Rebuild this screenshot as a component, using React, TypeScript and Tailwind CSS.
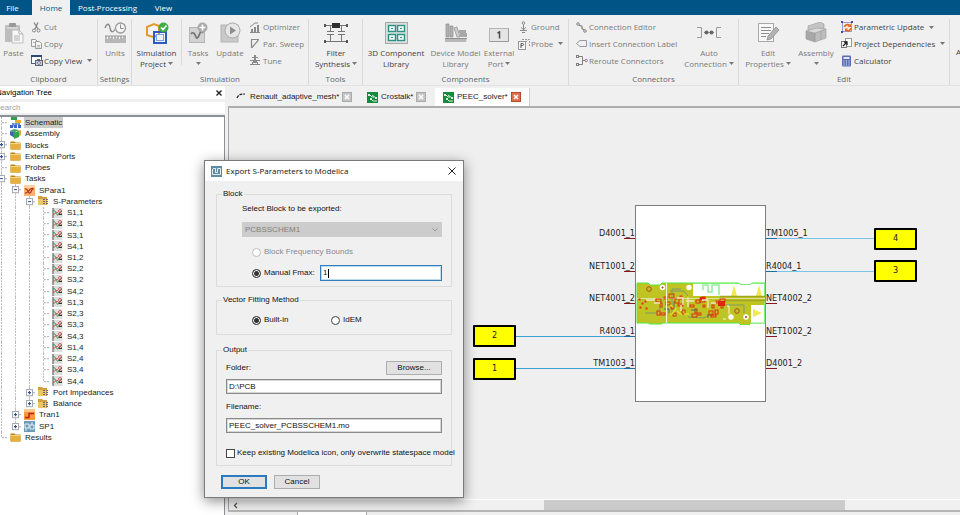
import type { ReactNode } from "react";

const DownArrow = ({ className = "" }: { className?: string }) => (
  <svg className={`inline-block h-[3px] w-[5px] ${className}`} viewBox="0 0 5 3">
    <path d="M0 0h5L2.500 3z" fill="#777" />
  </svg>
);

/* ---------- ribbon icons ---------- */

const PasteIcon = () => (
  <svg width="20" height="22" viewBox="0 0 20 22">
    <rect x="1" y="3" width="15" height="17" rx="1" fill="#bdbdbd" />
    <rect x="5" y="1" width="7" height="4" rx="1" fill="#999" />
    <rect x="3" y="5" width="11" height="2" fill="#d5d5d5" />
    <path d="M8 8h7l4 4v9H8z" fill="#f7f7f7" stroke="#bdbdbd" />
    <path d="M15 8v4h4M10 14h6M10 16h6M10 18h6" fill="none" stroke="#b0b0b0" />
  </svg>
);

const CutIcon = () => (
  <svg width="11" height="11" viewBox="0 0 11 11" fill="none" stroke="#868686">
    <path d="M3 0.500L7 7M7 0.500L4 7" strokeWidth="1.300" />
    <circle cx="3" cy="8.500" r="1.500" />
    <circle cx="7.500" cy="8.500" r="1.500" />
  </svg>
);

const CopyIcon = () => (
  <svg width="11" height="11" viewBox="0 0 11 11" fill="#f3f3f3" stroke="#999">
    <path d="M0.500 1.500h4l2 2v5h-6z" />
    <path d="M4.500 3.500h4l2 2v5h-6z" />
    <path d="M6 7.500h3M6 9h3M2 4.500h2" strokeWidth="0.700" />
  </svg>
);

const CopyViewIcon = () => (
  <svg width="12" height="11" viewBox="0 0 12 11">
    <rect x="0.500" y="0.500" width="10" height="8" fill="#fff" stroke="#4a5f8c" />
    <path d="M0 1h11" stroke="#31487c" strokeWidth="2" />
    <rect x="4.500" y="5.500" width="7" height="5" fill="#c9ced6" stroke="#5b6474" />
    <rect x="6" y="4" width="3" height="2" fill="#5b6474" />
    <circle cx="8" cy="8" r="1.400" fill="#fff" stroke="#4a5366" strokeWidth="0.700" />
  </svg>
);

const UnitsIcon = () => (
  <svg width="23" height="22" viewBox="0 0 23 22">
    <path d="M1 6c2-5 4-5 5 0s3 5 6 0" fill="none" stroke="#8b8b8b" strokeWidth="1.400" />
    <circle cx="16.500" cy="6" r="5" fill="#f5f5f5" stroke="#9b9b9b" strokeWidth="1.300" />
    <path d="M16.500 2.500V6.500h3" fill="none" stroke="#8b8b8b" />
    <rect x="1" y="14" width="21" height="7" fill="#b7b7b7" />
    <path d="M3.500 14v3M6.500 14v2M9.500 14v3M12.500 14v2M15.500 14v3M18.500 14v2" stroke="#f3f3f3" />
    <path d="M1 14h21" stroke="#9a9a9a" />
  </svg>
);

const SimulationIcon = () => (
  <svg width="24" height="23" viewBox="0 0 24 23">
    <path d="M2 5l7-3 5 2v9l-6 2-6-2z" fill="#f5f5f5" stroke="#e39a35" strokeWidth="2" />
    <rect x="9" y="10" width="12" height="11" fill="none" stroke="#2d5bc4" strokeWidth="2" />
    <rect x="11.500" y="12.500" width="7" height="6" fill="#eef2fb" stroke="#7ea0e6" />
    <circle cx="18.500" cy="5.500" r="5" fill="#3fae49" />
    <path d="M16 5.500l2 2 3.500-4" fill="none" stroke="#fff" strokeWidth="1.600" />
  </svg>
);

const TasksIcon = () => (
  <svg width="20" height="22" viewBox="0 0 20 22">
    <rect x="1.500" y="5.500" width="15" height="15" fill="#d2d2d2" stroke="#b5b5b5" />
    <path d="M3 12c2-3 4 0 5 3s3-1 4-4 2-1 3 0" fill="none" stroke="#747474" strokeWidth="1.700" />
    <circle cx="14.500" cy="5.500" r="5" fill="#a9a9a9" />
    <path d="M14.500 2.500v6M11.500 5.500h6" stroke="#fff" strokeWidth="1.700" />
  </svg>
);

const UpdateIcon = () => (
  <svg width="21" height="22" viewBox="0 0 21 22">
    <rect x="1" y="3" width="17" height="17" fill="#c9c9c9" stroke="#b3b3b3" />
    <circle cx="12.500" cy="8.500" r="7.500" fill="#e6e6e6" stroke="#a8a8a8" />
    <path d="M10 4.500v8l6-4z" fill="#8d8d8d" />
  </svg>
);

const OptimizerIcon = () => (
  <svg width="10" height="11" viewBox="0 0 10 11" fill="#8a8a8a">
    <path d="M1 7h2v3H1zM4 5h2v5H4zM7 3h2v7H7zM0 10h10v1H0z" />
    <path d="M0 5l5-4h3" fill="none" stroke="#8a8a8a" />
  </svg>
);

const SweepIcon = () => (
  <svg width="10" height="11" viewBox="0 0 10 11" fill="none" stroke="#8a8a8a">
    <path d="M1.500 10V1.500H9M2 9.500L8.500 2" strokeWidth="1.200" />
  </svg>
);

const TuneIcon = () => (
  <svg width="10" height="11" viewBox="0 0 10 11" fill="#8a8a8a">
    <path d="M4 0h2v5H4zM2 2h6v1H2zM0 5h3v1H0zM7 5h3v1H7zM3 5h4v3H3zM0 9h10v1H0zM2 7h1v3H2zM7 7h1v3H7z" />
  </svg>
);

const FilterIcon = () => (
  <svg width="24" height="22" viewBox="0 0 24 22" fill="none" stroke="#777">
    <path d="M1 3.500h22M1 19.500h22M6.500 4v5M6.500 13v6M17.500 4v5M17.500 13v6" />
    <path d="M3 9.500h7M3 12.500h7M14 9.500h7M14 12.500h7" />
    <rect x="8" y="1" width="8" height="5" fill="#2f2f2f" stroke="none" />
    <path d="M0 2h2v3H0zM22 2h2v3h-2zM0 18h2v3H0zM22 18h2v3h-2z" fill="#555" stroke="none" />
  </svg>
);

const LibraryIcon = () => (
  <svg width="23" height="22" viewBox="0 0 23 22">
    <rect x="0.500" y="0.500" width="22" height="21" fill="#dcdfde" stroke="#a4a8a7" />
    <g fill="#edf7f5" stroke="#2f9185" strokeWidth="1.400">
      <rect x="3.500" y="3.500" width="7" height="6" />
      <rect x="12.500" y="3.500" width="7" height="6" />
      <rect x="3.500" y="12.500" width="7" height="6" />
      <rect x="12.500" y="12.500" width="7" height="6" />
    </g>
    <path d="M6 6h2v1H6zM15 6h2v1h-2zM6 15h2v1H6zM15 15h2v1h-2z" fill="#2f9185" />
  </svg>
);

const DeviceIcon = () => (
  <svg width="24" height="22" viewBox="0 0 24 22">
    <path d="M2 2h3v13H2zM6 4h3v11H6z" fill="#b1b1b1" stroke="#8d8d8d" strokeWidth="0.700" />
    <path d="M10 6l3-1 3 10h-3z" fill="#cdcdcd" stroke="#8d8d8d" strokeWidth="0.700" />
    <path d="M15 8h7v3h-7zM16 11h7v4h-7z" fill="#a8a8a8" />
    <path d="M1 16h22l-1 4H1z" fill="#b8b8b8" />
    <path d="M1 16.500h22" stroke="#8f8f8f" />
  </svg>
);

const ExternalPortIcon = () => (
  <svg width="20" height="22" viewBox="0 0 20 22">
    <rect x="0.500" y="6.500" width="19" height="13" fill="#e4e4e4" stroke="#b5b5b5" />
    <path d="M1 19.500h18.500v-13" fill="none" stroke="#9b9b9b" />
    <path d="M8.500 11l2-1v6.500" fill="none" stroke="#4c4c4c" strokeWidth="1.500" />
  </svg>
);

const GroundIcon = () => (
  <svg width="11" height="12" viewBox="0 0 11 12" fill="none" stroke="#888">
    <circle cx="5.500" cy="2" r="1.300" />
    <path d="M5.500 3.500v6M2 9.500h7M4 11.500h3M3 6.500l2.500 2L8 6.500" />
  </svg>
);

const ProbeIcon = () => (
  <svg width="12" height="12" viewBox="0 0 12 12" fill="none" stroke="#999">
    <rect x="0.500" y="3.500" width="7" height="8" fill="#f5f5f5" />
    <path d="M3 10V5.500h1.500a1 1 0 010 2H3" stroke="#555" />
    <path d="M4 1.500h7.500V8M7.500 4.500l3-3" strokeDasharray="2 1" />
  </svg>
);

const ConnectionIcon = () => (
  <svg width="11" height="11" viewBox="0 0 11 11" fill="none" stroke="#858585">
    <circle cx="2" cy="2" r="1.300" />
    <circle cx="9" cy="9" r="1.300" />
    <path d="M3 3l3 1.500v2L8 8" strokeWidth="1.300" />
  </svg>
);

const LabelIcon = () => (
  <svg width="11" height="11" viewBox="0 0 11 11" fill="none" stroke="#999">
    <path d="M0.500 5.500L4 2.500h6.500v6H4z" />
  </svg>
);

const RerouteIcon = () => (
  <svg width="12" height="11" viewBox="0 0 12 11" fill="none" stroke="#808080">
    <rect x="0.500" y="0.500" width="2" height="2" />
    <rect x="0.500" y="8.500" width="2" height="2" />
    <path d="M3 1.500h3.500v8H3M6.500 5.500H9" />
    <circle cx="10.200" cy="5.500" r="1.200" />
  </svg>
);

const AutoIcon = () => (
  <svg width="24" height="22" viewBox="0 0 24 22" fill="none" stroke="#9a9a9a">
    <path d="M0 5.500h4.500v10H0M24 5.500h-4.500v10H24" />
    <path d="M7 10.500h10" stroke="#999" />
    <circle cx="9.500" cy="10.500" r="2" fill="#666" stroke="none" />
    <circle cx="14.500" cy="10.500" r="2" fill="#666" stroke="none" />
  </svg>
);

const EditIcon = () => (
  <svg width="23" height="22" viewBox="0 0 23 22">
    <rect x="1.500" y="1.500" width="15" height="18" fill="#f8f8f8" stroke="#a9a9a9" />
    <path d="M4 5.500h10M4 8.500h10M4 11.500h8M4 14.500h5" stroke="#8c8c8c" />
    <path d="M10 18l1-4 8-9 3 3-8 9z" fill="#b3b3b3" stroke="#8e8e8e" strokeWidth="0.800" />
  </svg>
);

const AssemblyIcon = () => (
  <svg width="22" height="22" viewBox="0 0 22 22" stroke="#999" strokeWidth="0.600">
    <path d="M3 4l12-4 4 2v4L6 9 3 8z" fill="#c4c4c4" />
    <path d="M1 9l9 2v9l-9-3z" fill="#a8a8a8" />
    <path d="M10 11l11-4v9l-11 4z" fill="#bdbdbd" />
    <path d="M1 9l11-3 9 1-11 4z" fill="#dadada" />
    <path d="M16 9v9" />
  </svg>
);

const ParametricIcon = () => (
  <svg width="12" height="12" viewBox="0 0 12 12">
    <rect x="1.500" y="1.500" width="9" height="9" fill="#fbe9dc" stroke="#9a9cd4" />
    <path d="M0 0h2v2H0zM10 0h2v2h-2zM0 10h2v2H0z" fill="#4349b3" />
    <path d="M3.500 6a3 3 0 015-1.500M10 7a3 3 0 01-5 2" fill="none" stroke="#e0692a" strokeWidth="1.800" />
    <path d="M10 2.500v3.500H6.500zM4 11V7.500h3z" fill="#e0692a" />
  </svg>
);

const DependenciesIcon = () => (
  <svg width="11" height="11" viewBox="0 0 11 11" fill="none">
    <rect x="4.500" y="0.500" width="6" height="8" fill="#fff" stroke="#999" />
    <rect x="0.500" y="3.500" width="5" height="6" fill="#f5f5f5" stroke="#777" />
    <path d="M2 8l4-4M3 4h3v3" stroke="#222" strokeWidth="1.300" />
  </svg>
);

const CalculatorIcon = () => (
  <svg width="11" height="12" viewBox="0 0 11 12">
    <rect x="1" y="0.500" width="9" height="11" rx="1" fill="#5c6db5" />
    <rect x="2.500" y="2" width="6" height="2" fill="#dfe4f7" />
    <path d="M3 5.500v5M5.500 5.500v5M8 5.500v5" stroke="#dfe4f7" strokeWidth="1.200" strokeDasharray="1 1" />
  </svg>
);

/* ---------- ribbon building blocks ---------- */

type GroupProps = { label: string; width: string; children?: ReactNode };

const Group = ({ label, width, children }: GroupProps) => (
  <section className={`flex shrink-0 flex-col border-r border-[#d9d9d9] ${width}`}>
    <div className="flex h-[54px]">{children}</div>
    <h2 className="pt-1 text-center leading-[12px] text-[#666]">{label}</h2>
  </section>
);

type BigProps = { icon: ReactNode; lines: string[]; width: string; arrow?: boolean; dark?: boolean };

const BigButton = ({ icon, lines, width, arrow, dark }: BigProps) => (
  <button
    className={`flex shrink-0 flex-col items-center whitespace-nowrap pt-[3px] leading-[11px] ${width} ${
      dark ? "text-[#444]" : "text-[#7a7a7a]"
    }`}
  >
    <span className="mb-[3px] flex h-[22px] items-center">{icon}</span>
    <span>{lines[0]}</span>
    <span className="flex h-[11px] items-center gap-[2px]">
      {lines[1]}
      {arrow && <DownArrow />}
    </span>
  </button>
);

const SmallColumn = ({ children, className = "" }: { children: ReactNode; className?: string }) => (
  <div className={`grid shrink-0 grid-rows-3 ${className}`}>{children}</div>
);

type SmallProps = { icon: ReactNode; label: string; arrow?: boolean; dark?: boolean };

const SmallButton = ({ icon, label, arrow, dark }: SmallProps) => (
  <button className={`flex items-center whitespace-nowrap ${dark ? "text-[#444]" : "text-[#7a7a7a]"}`}>
    <span className="w-[13px]">{icon}</span>
    {label}
    {arrow && <DownArrow className="ml-[5px]" />}
  </button>
);

const Ribbon = () => (
  <div className="flex h-[71px] shrink-0 overflow-hidden border-b border-[#e2e2e2] bg-[#f0f0f0] font-['Open_Sans',sans-serif] pt-1 text-[8px]">
    <Group label="Clipboard" width="w-[98px]">
      <BigButton icon={<PasteIcon />} lines={["Paste"]} width="w-[27px]" />
      <SmallColumn className="pl-1">
        <SmallButton icon={<CutIcon />} label="Cut" />
        <SmallButton icon={<CopyIcon />} label="Copy" />
        <SmallButton icon={<CopyViewIcon />} label="Copy View" arrow dark />
      </SmallColumn>
    </Group>
    <Group label="Settings" width="w-[34px]">
      <BigButton icon={<UnitsIcon />} lines={["Units"]} width="w-[34px]" />
    </Group>
    <Group label="Simulation" width="w-[177px]">
      <BigButton icon={<SimulationIcon />} lines={["Simulation", "Project"]} width="w-[49px]" arrow dark />
      <div className="mb-1 w-px bg-[#d9d9d9]" />
      <BigButton icon={<TasksIcon />} lines={["Tasks", ""]} width="w-8" arrow />
      <BigButton icon={<UpdateIcon />} lines={["Update"]} width="w-8" />
      <SmallColumn className="pl-1">
        <SmallButton icon={<OptimizerIcon />} label="Optimizer" />
        <SmallButton icon={<SweepIcon />} label="Par. Sweep" />
        <SmallButton icon={<TuneIcon />} label="Tune" />
      </SmallColumn>
    </Group>
    <Group label="Tools" width="w-[54px]">
      <BigButton icon={<FilterIcon />} lines={["Filter", "Synthesis"]} width="w-[54px]" arrow dark />
    </Group>
    <Group label="Components" width="w-[206px]">
      <BigButton icon={<LibraryIcon />} lines={["3D Component", "Library"]} width="w-[66px]" dark />
      <BigButton icon={<DeviceIcon />} lines={["Device Model", "Library"]} width="w-[53px]" />
      <BigButton icon={<ExternalPortIcon />} lines={["External", "Port"]} width="w-[34px]" arrow />
      <SmallColumn className="pl-[2px]">
        <SmallButton icon={<GroundIcon />} label="Ground" />
        <SmallButton icon={<ProbeIcon />} label="Probe" arrow />
      </SmallColumn>
    </Group>
    <Group label="Connectors" width="w-[170px]">
      <SmallColumn className="w-[114px] pl-[7px]">
        <SmallButton icon={<ConnectionIcon />} label="Connection Editor" />
        <SmallButton icon={<LabelIcon />} label="Insert Connection Label" />
        <SmallButton icon={<RerouteIcon />} label="Reroute Connectors" />
      </SmallColumn>
      <BigButton icon={<AutoIcon />} lines={["Auto", "Connection"]} width="w-[52px]" arrow />
    </Group>
    <Group label="Edit" width="w-[211px]">
      <BigButton icon={<EditIcon />} lines={["Edit", "Properties"]} width="w-[58px]" arrow />
      <BigButton icon={<AssemblyIcon />} lines={["Assembly", ""]} width="w-[38px]" arrow />
      <SmallColumn className="pl-[6px]">
        <SmallButton icon={<ParametricIcon />} label="Parametric Update" arrow dark />
        <SmallButton icon={<DependenciesIcon />} label="Project Dependencies" arrow dark />
        <SmallButton icon={<CalculatorIcon />} label="Calculator" dark />
      </SmallColumn>
    </Group>
    <button className="pl-[6px] text-[#444]">A</button>
  </div>
);

/* ---------- navigation tree ---------- */

const FolderIcon = () => (
  <svg width="11" height="10" viewBox="0 0 11 10">
    <path d="M0.500 1.500h4l1 1h5v7h-10z" fill="#b98318" />
    <path d="M0.500 3.500h10v6h-10z" fill="#e6b03c" />
    <path d="M0.500 3.500h10" stroke="#f7d888" />
  </svg>
);

const StackFolderIcon = () => (
  <svg width="11" height="10" viewBox="0 0 11 10">
    <path d="M0 0h4l1 1h4v8H0z" fill="#cfa03e" />
    <path d="M0 3h8v6H0z" fill="#ecc565" />
    <path d="M5 3.500h5M5 5.500h6M5 7.500h6" stroke="#6d6478" strokeDasharray="2 1" />
  </svg>
);

const SchematicIcon = () => (
  <svg width="12" height="11" viewBox="0 0 12 11">
    <rect x="1" y="0" width="6" height="3" fill="#2f9e48" />
    <rect x="5" y="3" width="6" height="3" fill="#e8b132" />
    <path d="M2 7h8M3 6v4M6 6v4M9 6v4" stroke="#3c62c4" />
    <path d="M0 8h3v3H0zM4 8h3v3H4zM8 8h3v3H8z" fill="#3c62c4" />
  </svg>
);

const CubeIcon = () => (
  <svg width="12" height="11" viewBox="0 0 12 11">
    <path d="M7 3l4-1v5L8 9z" fill="#e0a93a" />
    <path d="M0 3l4-2 5 1-4 2z" fill="#3fa85a" />
    <path d="M0 3l5 1v6L0 7z" fill="#3f62b4" />
    <path d="M3 5l6-2v6l-5 2z" fill="#37a34a" />
  </svg>
);

const SParaIcon = () => (
  <svg width="11" height="11" viewBox="0 0 11 11">
    <rect width="11" height="11" fill="#f9b473" />
    <path d="M0 0h11v3H0z" fill="#fbd0a2" />
    <path d="M1 4c3-1 3 5 5 4s1-5 4-4M1 8c3 1 4-5 8-5" fill="none" stroke="#b8341c" strokeWidth="1.200" />
  </svg>
);

const CurveIcon = () => (
  <svg width="11" height="10" viewBox="0 0 11 10">
    <rect x="0.500" width="10" height="10" fill="#dedede" />
    <path d="M1 0v10" stroke="#555" />
    <path d="M1 3c3-2 3 5 5 4s2-4 4-4" fill="none" stroke="#279a3c" />
    <path d="M1 6c2 1 3-3 5-1s3 1 4 0" fill="none" stroke="#c8283a" strokeWidth="0.800" />
    <circle cx="8" cy="3" r="1.500" fill="none" stroke="#c8283a" strokeWidth="0.700" />
    <path d="M7 6.500h3" stroke="#333" />
  </svg>
);

const TranIcon = () => (
  <svg width="11" height="11" viewBox="0 0 11 11">
    <rect width="11" height="11" fill="#f59a3c" />
    <path d="M0 0h11v3H0z" fill="#fac68b" />
    <path d="M1 8.500h4v-4h5" fill="none" stroke="#c01f14" strokeWidth="1.500" />
  </svg>
);

const SpIcon = () => (
  <svg width="11" height="11" viewBox="0 0 11 11">
    <rect width="11" height="11" fill="#6d9ab8" />
    <path d="M1 3h4v4H1zM6 4h4v4H6zM2 7v3M8 1v3" fill="none" stroke="#e6f1f8" />
  </svg>
);

type Guide = "line" | "tee" | "end";
type TreeRow = {
  label: string;
  icon: ReactNode;
  guides: Guide[];
  toggle?: "plus" | "minus";
  selected?: boolean;
};

const traces = [1, 2, 3, 4].flatMap((to) => [1, 2, 3, 4].map((from) => `S${from},${to}`));

const treeRows: TreeRow[] = [
  { label: "Schematic", icon: <SchematicIcon />, guides: ["tee"], selected: true },
  { label: "Assembly", icon: <CubeIcon />, guides: ["tee"] },
  { label: "Blocks", icon: <FolderIcon />, guides: ["tee"], toggle: "plus" },
  { label: "External Ports", icon: <FolderIcon />, guides: ["tee"], toggle: "plus" },
  { label: "Probes", icon: <FolderIcon />, guides: ["tee"] },
  { label: "Tasks", icon: <FolderIcon />, guides: ["tee"], toggle: "minus" },
  { label: "SPara1", icon: <SParaIcon />, guides: ["line", "tee"], toggle: "minus" },
  { label: "S-Parameters", icon: <StackFolderIcon />, guides: ["line", "line", "tee"], toggle: "minus" },
  ...traces.map((label, i): TreeRow => ({
    label,
    icon: <CurveIcon />,
    guides: ["line", "line", "line", i === traces.length - 1 ? "end" : "tee"],
  })),
  { label: "Port Impedances", icon: <StackFolderIcon />, guides: ["line", "line", "tee"], toggle: "plus" },
  { label: "Balance", icon: <StackFolderIcon />, guides: ["line", "line", "end"], toggle: "plus" },
  { label: "Tran1", icon: <TranIcon />, guides: ["line", "tee"], toggle: "plus" },
  { label: "SP1", icon: <SpIcon />, guides: ["line", "end"], toggle: "plus" },
  { label: "Results", icon: <FolderIcon />, guides: ["end"] },
];

const GuideCell = ({ kind, toggle }: { kind: Guide; toggle?: "plus" | "minus" }) => (
  <svg className="h-full w-[14px] shrink-0" viewBox="0 0 14 11" preserveAspectRatio="none">
    <path d={kind === "end" ? "M6.500 0v5.500" : "M6.500 0v11"} stroke="#bdbdbd" strokeDasharray="2 1" />
    {kind !== "line" && <path d="M7 5.500h6" stroke="#bdbdbd" strokeDasharray="2 1" />}
    {toggle && (
      <>
        <rect x="3.500" y="2.500" width="6" height="6" fill="#fff" stroke="#a3a9b5" />
        <path d={toggle === "plus" ? "M5 5.500h3M6.500 4v3" : "M5 5.500h3"} stroke="#35518c" />
      </>
    )}
  </svg>
);

const NavigationTree = () => (
  <aside className="flex w-[225px] shrink-0 flex-col">
    <div className="flex h-[13px] items-center justify-between overflow-hidden bg-white pr-[2px]">
      <h2 className="-ml-1 text-black">Navigation Tree</h2>
      <button aria-label="Close" className="p-px">
        <svg width="6" height="6" viewBox="0 0 6 6" stroke="#222" strokeWidth="1.400">
          <path d="M0.500 0.500l5 5M5.500 0.500l-5 5" />
        </svg>
      </button>
    </div>
    <div className="mt-[3px] overflow-hidden bg-white">
      <input
        type="search"
        aria-label="Search"
        placeholder="Search"
        className="-ml-[5px] block h-[11px] w-full leading-[11px] outline-none placeholder:text-[#a0a0a0]"
      />
    </div>
    <div className="mt-[2px] flex-1 overflow-hidden border-r border-t-2 border-[#8c9096] bg-white">
      <ul className="-ml-[5px] grid h-[326px] auto-rows-fr text-[#222]">
        {treeRows.map((row) => (
          <li key={row.label} className="flex min-h-0 items-center">
            {row.guides.map((kind, i) => (
              <GuideCell key={i} kind={kind} toggle={i === row.guides.length - 1 ? row.toggle : undefined} />
            ))}
            <span className="mr-[2px] flex w-[13px] shrink-0 justify-center">{row.icon}</span>
            <span className={`whitespace-nowrap px-px leading-[11px] ${row.selected ? "bg-[#cbcbcb]" : ""}`}>
              {row.label}
            </span>
          </li>
        ))}
      </ul>
    </div>
  </aside>
);

/* ---------- document tabs ---------- */

const DesignIcon = () => (
  <svg width="11" height="11" viewBox="0 0 11 11">
    <rect width="11" height="11" fill="#148a3c" />
    <path d="M1 3h2l2 2h2M4 7l2 2h4M5 3l4 3" fill="none" stroke="#d8f2df" />
    <path d="M1 2h2v2H1zM8 5h2v2H8zM3 6h2v2H3z" fill="#d8f2df" />
  </svg>
);

const ArcIcon = () => (
  <svg width="11" height="11" viewBox="0 0 11 11" fill="none" stroke="#222" strokeWidth="1.200">
    <path d="M1 6C2 3 4 2 9 2" strokeDasharray="3 1" />
  </svg>
);

const TabClose = ({ active }: { active?: boolean }) => (
  <button aria-label="Close tab">
    <svg width="10" height="10" viewBox="0 0 10 10">
      <rect
        x="0.500"
        y="0.500"
        width="9"
        height="9"
        fill={active ? "#dd6f4d" : "#c6c6c6"}
        stroke={active ? "#b9492a" : "#a9a9a9"}
      />
      <path d="M3 3l4 4M7 3l-4 4" stroke="#fff" strokeWidth="1.500" />
    </svg>
  </button>
);

const DocumentTabs = () => (
  <div className="flex h-[22px] shrink-0 items-stretch border-b-2 border-[#adadad] bg-[#f0f0f0] pl-2 pt-[2px] text-[#222]">
    <div className="flex w-[131px] items-center gap-[3px]">
      <ArcIcon />
      <span>Renault_adaptive_mesh*</span>
      <TabClose />
    </div>
    <div className="flex w-[68px] items-center gap-[3px]">
      <DesignIcon />
      <span>Crostalk*</span>
      <TabClose />
    </div>
    <div className="flex items-center gap-[3px] border-r border-[#ccc] bg-white px-2">
      <DesignIcon />
      <span>PEEC_solver*</span>
      <TabClose active />
    </div>
  </div>
);

/* ---------- schematic ---------- */

const specks = [
  [3, 18], [6, 22], [4, 26], [9, 20], [10, 27], [21, 30], [25, 32], [20, 18], [24, 22], [28, 16], [30, 21],
  [33, 13], [35, 26], [37, 32], [39, 18], [42, 23], [44, 15], [46, 29], [54, 24], [56, 33], [59, 28], [62, 32],
  [60, 19], [64, 17], [67, 24], [66, 16], [73, 30], [75, 34], [76, 24], [79, 29], [80, 20], [84, 18], [85, 23],
];

const PcbLayout = () => (
  <svg width="130" height="44" viewBox="0 0 130 44" className="absolute left-0 top-[75px]" fill="none">
    <path
      d="M1 2h11l2 2h10l2-2h77l2 2h9l2-2h13v40h-14l-2 2h-8l-2-2H27l-2 1H14l-2-1H1z"
      fill="#bfc423"
      stroke="#4dea3c"
    />
    <rect x="57" y="3" width="71" height="12" fill="#fff" />
    <rect x="115" y="24" width="13" height="18" fill="#fff" />
    <path d="M57 2.500h46l2 1h9l2-1h12.500v39.500h-14" stroke="#7ef07a" />
    <path d="M67 9V4h5v7h4V4h7v10" stroke="#8df09c" strokeWidth="1.500" />
    <path d="M98 4l-3 11h6zM123 4l-3 11h6zM117 28v8l9-4z" fill="#f0ea52" />
    <path d="M1 17.500h128" stroke="#dfe29a" />
    <path d="M84 15.500h45M86 19.500h43" stroke="#a3a51c" strokeWidth="1.500" />
    <path d="M9 32h12l4-6M34 10h14l4 5M52 36l16 1 8-5M88 24h20v8M45 8h-9v26" stroke="#7f9a6c" />
    <path d="M30 8h-4v28M40 34h20M62 20v17M87 17v22" stroke="#a0ce38" />
    <g stroke="#dd3010">
      {specks.map(([x, y], i) => (
        <rect key={i} x={x} y={y} width={x < 12 ? 1 : 2 + (i % 4)} height={x < 12 ? 1 : 2 + (i % 3)} />
      ))}
      <circle cx="13" cy="8" r="2.300" stroke="#b5451c" />
      <circle cx="101" cy="30" r="2.300" stroke="#b5451c" />
    </g>
    <path d="M82 20h7v5h-7zM64 16h5v3h-5z" fill="#e02414" />
    <path
      d="M10 19h8v-2M18 22h6M41 17h6v7M50 20h8M66 19h6v8M75 22h5M45 24v6M52 16v10"
      stroke="#efe8c4"
      strokeWidth="1.300"
    />
    <path d="M34 24l6 4-5 6M41 30l5 4M48 33h5" stroke="#eadc2b" strokeWidth="1.500" />
    <path d="M28 28h5v4M38 20v8M55 29h6M72 33v4" stroke="#536a60" />
    <path d="M30.500 2v40M91 25h2v8M87 38h3" stroke="#f6f6d8" />
    <g fill="#fff">
      <circle cx="26.500" cy="6.500" r="2.700" />
      <circle cx="53" cy="6.500" r="2.700" />
      <circle cx="95" cy="36" r="2.700" />
      <circle cx="110" cy="36" r="2.700" />
    </g>
    <path d="M26 6h1v1h-1zM109.500 35.500h1v1h-1z" stroke="#c03020" />
  </svg>
);

const leftPins = [
  { name: "D4001_1", wired: false },
  { name: "NET1001_2", wired: false },
  { name: "NET4001_2", wired: false },
  { name: "R4003_1", wired: true },
  { name: "TM1003_1", wired: true },
];

const rightPins = [
  { name: "TM1005_1", wired: true },
  { name: "R4004_1", wired: true },
  { name: "NET4002_2", wired: false },
  { name: "NET1002_2", wired: false },
  { name: "D4001_2", wired: false },
];

const pinTops = ["top-[121px]", "top-[154px]", "top-[186px]", "top-[219px]", "top-[251px]"];

const ports = [
  { id: 4, place: "left-[645px] top-[120px]" },
  { id: 3, place: "left-[645px] top-[152px]" },
  { id: 2, place: "left-[244px] top-[217px]" },
  { id: 1, place: "left-[244px] top-[250px]" },
];

const SchematicCanvas = () => (
  <div className="relative flex-1 overflow-hidden bg-[#efefef] font-['DejaVu_Sans_Condensed','Noto_Sans',sans-serif] text-[9px] text-[#222]">
    {/* wires */}
    <div className="absolute left-[287px] top-[228px] h-px w-[120px] bg-[#3c9ed6]" />
    <div className="absolute left-[287px] top-[260px] h-px w-[120px] bg-[#3c9ed6]" />
    <div className="absolute left-[537px] top-[130px] h-px w-[108px] bg-[#7cc3ea]" />
    <div className="absolute left-[537px] top-[163px] h-px w-[108px] bg-[#7cc3ea]" />

    {leftPins.map((pin, i) => (
      <div key={pin.name} className={`absolute left-[340px] flex w-[66px] flex-col items-end leading-[9px] ${pinTops[i]}`}>
        {pin.name}
        <span className={`h-px w-[11px] ${pin.wired ? "bg-[#1c6ea4]" : "bg-[#8e1616]"}`} />
      </div>
    ))}
    {rightPins.map((pin, i) => (
      <div key={pin.name} className={`absolute left-[537px] flex w-[66px] flex-col items-start leading-[9px] ${pinTops[i]}`}>
        {pin.name}
        <span className={`h-px w-[11px] ${pin.wired ? "bg-[#1c6ea4]" : "bg-[#8e1616]"}`} />
      </div>
    ))}

    <div className="absolute left-[406px] top-[97px] h-[197px] w-[131px] border border-[#7d7d7d] bg-white">
      <PcbLayout />
    </div>

    {ports.map((port) => (
      <div
        key={port.id}
        className={`absolute flex h-[22px] w-[43px] items-center justify-center rounded-[1px] border-2 border-black bg-[#ffff00] ${port.place}`}
      >
        {port.id}
      </div>
    ))}
  </div>
);

const Workspace = () => (
  <main className="ml-[3px] flex min-w-0 flex-1 flex-col">
    <DocumentTabs />
    <div className="flex min-h-0 flex-1 flex-col border-l border-[#a5a5a5]">
      <SchematicCanvas />
      <div className="flex h-[12px] shrink-0 items-center border-b border-t border-b-[#b5b5b5] border-t-white bg-[#f0f0f0]">
        <button aria-label="Scroll left" className="w-[14px] pl-1">
          <svg width="5" height="7" viewBox="0 0 5 7" fill="none" stroke="#555" strokeWidth="1.300">
            <path d="M4 1L1.500 3.500 4 6" />
          </svg>
        </button>
        <div className="flex h-full flex-1">
          <div className="h-full w-[42%]" />
          <div className="h-full w-[42%] bg-[#cbcbcb]" />
        </div>
      </div>
    </div>
    <div className="flex h-[4px] shrink-0 border-t border-[#b5b5b5] pl-[69px]">
      <div className="h-full w-[70px] border-x border-[#aaa] bg-white" />
    </div>
  </main>
);

/* ---------- export dialog ---------- */

const radioClass =
  "m-0 size-[9px] shrink-0 appearance-none rounded-full border border-[#444] bg-white checked:bg-[#333] checked:shadow-[inset_0_0_0_1px_#fff] disabled:border-[#bdbdbd]";
const fieldClass =
  "block h-[15px] w-full border border-[#8a8a8a] bg-white px-[2px] leading-[13px] shadow-[inset_0_0_0_1px_#d6d6d6] outline-none";
const buttonClass = "flex h-[14px] items-center justify-center bg-[#e1e1e1] text-[#111]";

const ExportDialog = () => (
  <form
    role="dialog"
    aria-label="Export S-Parameters to Modelica"
    onSubmit={(e) => e.preventDefault()}
    className="absolute left-[204px] top-[160px] w-[260px] border border-[#7b7b7b] bg-[#f0f0f0] pb-2 leading-[10px] text-[#111] shadow-[0_3px_12px_rgba(0,0,0,0.45)]"
  >
    <header className="flex h-5 items-center bg-white pl-[6px] pr-[7px] font-['Open_Sans',sans-serif]">
      <svg width="11" height="11" viewBox="0 0 11 11">
        <rect width="11" height="11" fill="#5d8ba3" />
        <path d="M1.500 3v5.500h8V2.500h-3v4h-2v-4H2" fill="none" stroke="#e2eff5" />
      </svg>
      <h1 className="ml-1 flex-1">Export S-Parameters to Modelica</h1>
      <button type="button" aria-label="Close">
        <svg width="8" height="8" viewBox="0 0 8 8" stroke="#222">
          <path d="M0.500 0.500l7 7M7.500 0.500l-7 7" />
        </svg>
      </button>
    </header>

    <div className="px-[11px] pt-2">
      <fieldset className="h-[98px] min-w-0 border border-[#dcdcdc] pl-[25px] pr-[9px]">
        <legend className="-ml-[20px] px-px">Block</legend>
        <label htmlFor="block" className="block pt-[5px]">
          Select Block to be exported:
        </label>
        <div className="relative mt-2">
          <select
            id="block"
            disabled
            className="block h-[15px] w-full appearance-none bg-[#cccccc] pl-[3px] leading-[15px] text-[#808080] opacity-100"
          >
            <option>PCBSSCHEM1</option>
          </select>
          <svg className="absolute right-1 top-[6px]" width="6" height="4" viewBox="0 0 6 4" fill="none" stroke="#999">
            <path d="M0.500 0.500L3 3l2.500-2.500" />
          </svg>
        </div>
        <label className="ml-[10px] mt-[10px] flex items-center gap-[3px] text-[#8a8a8a]">
          <input type="radio" name="bounds" disabled className={radioClass} />
          Block Frequency Bounds
        </label>
        <div className="ml-[10px] mt-2 flex items-center">
          <label className="flex w-[68px] items-center gap-[3px] whitespace-nowrap">
            <input type="radio" name="bounds" defaultChecked className={radioClass} />
            Manual Fmax:
          </label>
          <div className="flex h-4 flex-1 items-center border border-[#2f7fbd] bg-white px-[2px] shadow-[inset_0_0_0_1px_#bfdcf0]">
            <input aria-label="Manual Fmax" defaultValue="1" size={1} className="w-[5px] bg-transparent outline-none" />
            <span className="h-[9px] w-px bg-black" />
          </div>
        </div>
      </fieldset>

      <fieldset className="mt-2 flex h-[40px] min-w-0 border border-[#dcdcdc] pl-[35px]">
        <legend className="-ml-[30px] px-px">Vector Fitting Method</legend>
        <label className="flex h-[30px] w-[79px] items-center gap-[3px]">
          <input type="radio" name="method" defaultChecked className={radioClass} />
          Built-in
        </label>
        <label className="flex h-[30px] items-center gap-[3px]">
          <input type="radio" name="method" className={radioClass} />
          IdEM
        </label>
      </fieldset>

      <fieldset className="mt-[10px] h-[121px] min-w-0 border border-[#dcdcdc] px-[9px]">
        <legend className="-ml-1 px-px">Output</legend>
        <div className="flex items-center justify-between pt-[6px]">
          <label htmlFor="folder">Folder:</label>
          <button type="button" className={`${buttonClass} w-14 border border-[#adadad]`}>
            Browse...
          </button>
        </div>
        <input id="folder" defaultValue="D:\PCB" className={`${fieldClass} mt-1`} />
        <label htmlFor="filename" className="mt-2 block">
          Filename:
        </label>
        <input id="filename" defaultValue="PEEC_solver_PCBSSCHEM1.mo" className={`${fieldClass} mt-[6px]`} />
        <label className="mt-[15px] flex items-center gap-[2px] whitespace-nowrap">
          <input
            type="checkbox"
            className="m-0 size-[9px] shrink-0 appearance-none border border-[#444] bg-white checked:bg-[#333]"
          />
          Keep existing Modelica icon, only overwrite statespace model
        </label>
      </fieldset>

      <div className="mt-[9px] flex gap-[7px] pl-[5px]">
        <button type="submit" className={`${buttonClass} w-[46px] border-2 border-[#2a7ac0]`}>
          OK
        </button>
        <button type="button" className={`${buttonClass} w-[46px] border border-[#adadad]`}>
          Cancel
        </button>
      </div>
    </div>
  </form>
);

const App = () => (
  <div className="relative flex h-screen flex-col overflow-hidden bg-[#f0f0f0] font-['Liberation_Sans',Arial,sans-serif] text-[8px]">
    <nav className="flex h-[15px] shrink-0 items-stretch bg-[#005587] font-['Open_Sans',sans-serif] text-white">
      <button className="w-8 pr-[7px]">File</button>
      <button className="w-[38px] bg-[#f0f0f0] text-[#005587]">Home</button>
      <button className="w-[75px]">Post-Processing</button>
      <button className="w-[37px]">View</button>
    </nav>
    <Ribbon />
    <div className="flex min-h-0 flex-1">
      <NavigationTree />
      <Workspace />
    </div>
    <ExportDialog />
  </div>
);

export default App;
